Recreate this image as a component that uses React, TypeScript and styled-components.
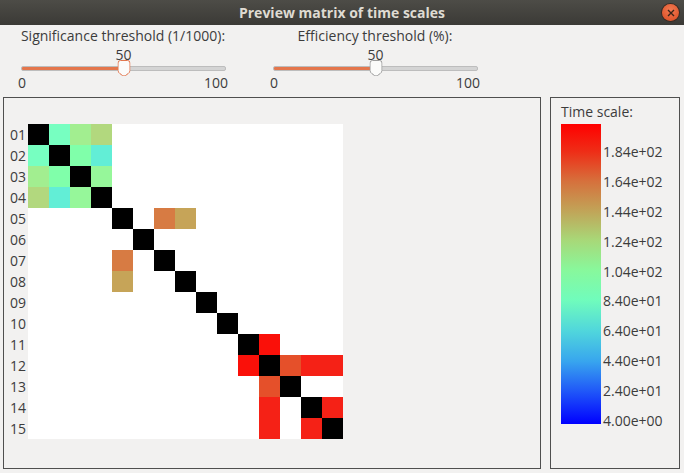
import React from 'react';
import styled, { createGlobalStyle } from 'styled-components';

const GlobalStyle = createGlobalStyle`
  html, body {
    margin: 0;
    padding: 0;
    background: #f2f1f0;
  }
  body {
    font-family: 'Open Sans', 'Liberation Sans', sans-serif;
    color: #3c3c3c;
  }
`;

const Window = styled.div`
  width: 684px;
  height: 473px;
  display: flex;
  flex-direction: column;
  background: #f2f1f0;
  overflow: hidden;
`;

const TitleBar = styled.div`
  height: 25px;
  display: grid;
  grid-template-columns: 1fr auto 1fr;
  align-items: center;
  background: linear-gradient(#4d4c47, #3b3a36);
`;

const Title = styled.div`
  grid-column: 2;
  font-size: 14px;
  font-weight: bold;
  color: #dfdbd2;
  line-height: 16px;
`;

const CloseButton = styled.div`
  grid-column: 3;
  justify-self: end;
  margin-right: 5px;
  width: 17px;
  height: 17px;
  border-radius: 50%;
  background: radial-gradient(circle at 50% 35%, #f27a52, #d9491f);
  box-shadow: 0 0 0 1px #3a2a22;
  display: flex;
  align-items: center;
  justify-content: center;
`;

const Controls = styled.div`
  height: 72px;
  display: flex;
  gap: 42px;
  padding: 3px 0 0 18px;
  box-sizing: border-box;
`;

const SliderGroup = styled.div`
  width: 210px;
  display: flex;
  flex-direction: column;
`;

const GroupLabel = styled.div`
  height: 16px;
  line-height: 16px;
  font-size: 14px;
  text-align: center;
  white-space: nowrap;
`;

const ValueRow = styled.div`
  height: 17px;
  margin: 0 2px 0 3px;
  position: relative;
`;

const ValueText = styled.span<{ $pct: number }>`
  position: absolute;
  left: ${({ $pct }) => $pct}%;
  top: 3px;
  transform: translateX(-50%);
  line-height: 15px;
  font-size: 14px;
`;

const TrackArea = styled.div`
  height: 14px;
  margin: 0 2px 0 3px;
  position: relative;
  display: flex;
  align-items: center;
`;

const Track = styled.div`
  flex: 1;
  height: 3px;
  border-radius: 2px;
  background: #d4d4d4;
  border: 1px solid #bdbdbd;
  overflow: hidden;
  display: flex;
`;

const TrackFill = styled.div<{ $pct: number }>`
  width: ${({ $pct }) => $pct}%;
  background: #e4764c;
`;

const Thumb = styled.svg<{ $pct: number }>`
  position: absolute;
  left: ${({ $pct }) => $pct}%;
  top: -1px;
  transform: translateX(-50%);
`;

const Ticks = styled.div`
  height: 14px;
  line-height: 14px;
  font-size: 14px;
  display: flex;
  justify-content: space-between;
  margin-top: 1px;
`;

const Panels = styled.div`
  flex: 1;
  display: flex;
  gap: 9px;
  padding: 0 4px 4px 3px;
`;

const MatrixPanel = styled.div`
  width: 538px;
  border: 1px solid #4f4f4f;
  box-sizing: border-box;
  padding: 26px 0 0 6px;
`;

const Matrix = styled.div`
  display: grid;
  grid-template-columns: 18px repeat(15, 21px);
  grid-auto-rows: 21px;
`;

const RowLabel = styled.div`
  font-size: 14px;
  line-height: 21px;
  text-align: right;
  padding-right: 2px;
`;

const Cell = styled.div<{ $color: string }>`
  background: ${({ $color }) => $color};
`;

const ScalePanel = styled.div`
  flex: 1;
  border: 1px solid #4f4f4f;
  box-sizing: border-box;
  padding: 6px 0 0 10px;
  display: flex;
  flex-direction: column;
  gap: 4px;
`;

const ScaleTitle = styled.div`
  height: 16px;
  line-height: 16px;
  font-size: 14px;
`;

const ScaleBody = styled.div`
  display: flex;
  gap: 2px;
`;

const ColorBar = styled.div`
  width: 40px;
  height: 300px;
  background: linear-gradient(
    to bottom,
    #ff0000 0%,
    #ee2e17 9.3%,
    #d6703c 19%,
    #c1a458 29%,
    #a8d878 38.7%,
    #88f89c 48.7%,
    #70fcbc 58.7%,
    #50d6dc 69%,
    #38a6ee 79%,
    #2058f8 89%,
    #0000ff 100%
  );
`;

const ScaleLabels = styled.div`
  display: flex;
  flex-direction: column;
  gap: 13.9px;
  padding-top: 20px;
`;

const ScaleLabel = styled.div`
  height: 16px;
  line-height: 16px;
  font-size: 14px;
`;

const SCALE_LABELS = ['1.84e+02', '1.64e+02', '1.44e+02', '1.24e+02', '1.04e+02', '8.40e+01', '6.40e+01', '4.40e+01', '2.40e+01', '4.00e+00'];

// upper-triangle pairs (1-indexed), mirrored below the diagonal
const PAIRS: [number, number, string][] = [
  [1, 2, '#77ffc1'],
  [1, 3, '#a2ee90'],
  [1, 4, '#b2d87e'],
  [2, 3, '#80ffaa'],
  [2, 4, '#62eed6'],
  [3, 4, '#96f79a'],
  [5, 7, '#d77b43'],
  [5, 8, '#c6a458'],
  [11, 12, '#fa1009'],
  [12, 13, '#e5502a'],
  [12, 14, '#f52116'],
  [12, 15, '#f52116'],
  [14, 15, '#f52116'],
];

const N = 15;

const buildMatrix = () => {
  const rows: string[][] = Array.from({ length: N }, (_, i) =>
    Array.from({ length: N }, (_, j) => (i === j ? '#000000' : '#ffffff'))
  );
  PAIRS.forEach(([a, b, c]) => {
    rows[a - 1][b - 1] = c;
    rows[b - 1][a - 1] = c;
  });
  return rows;
};

interface SliderProps {
  label: string;
  value: number;
  focused?: boolean;
}

const Slider: React.FC<SliderProps> = ({ label, value, focused }) => (
  <SliderGroup>
    <GroupLabel>{label}</GroupLabel>
    <ValueRow>
      <ValueText $pct={value}>{value}</ValueText>
    </ValueRow>
    <TrackArea>
      <Track>
        <TrackFill $pct={value} />
      </Track>
      <Thumb $pct={value} width={13} height={16} viewBox='0 0 13 16'>
        <path
          d='M0.5 3 a2.5 2.5 0 0 1 2.5 -2.5 h7 a2.5 2.5 0 0 1 2.5 2.5 v7.5 q0 1.8 -2 3.2 l-2.6 1.9 q-1.4 0.9 -2.8 0 l-2.6 -1.9 q-2 -1.4 -2 -3.2 z'
          fill='#fbfbfa'
          stroke={focused ? '#e2774f' : '#9c9c9c'}
        />
      </Thumb>
    </TrackArea>
    <Ticks>
      <span>0</span>
      <span>100</span>
    </Ticks>
  </SliderGroup>
);

export default function App() {
  const matrix = buildMatrix();

  return (
    <Window>
      <GlobalStyle />
      <TitleBar>
        <Title>Preview matrix of time scales</Title>
        <CloseButton>
          <svg width={8} height={8} viewBox='0 0 8 8'>
            <path d='M1 1 L7 7 M7 1 L1 7' stroke='#3a2418' strokeWidth={1.4} />
          </svg>
        </CloseButton>
      </TitleBar>

      <Controls>
        <Slider label='Significance threshold (1/1000):' value={50} focused />
        <Slider label='Efficiency threshold (%):' value={50} />
      </Controls>

      <Panels>
        <MatrixPanel>
          <Matrix>
            {matrix.map((row, i) => (
              <React.Fragment key={`row-${i}`}>
                <RowLabel>{String(i + 1).padStart(2, '0')}</RowLabel>
                {row.map((c, j) => (
                  <Cell key={`cell-${i}-${j}`} $color={c} />
                ))}
              </React.Fragment>
            ))}
          </Matrix>
        </MatrixPanel>

        <ScalePanel>
          <ScaleTitle>Time scale:</ScaleTitle>
          <ScaleBody>
            <ColorBar />
            <ScaleLabels>
              {SCALE_LABELS.map((l) => (
                <ScaleLabel key={l}>{l}</ScaleLabel>
              ))}
            </ScaleLabels>
          </ScaleBody>
        </ScalePanel>
      </Panels>
    </Window>
  );
}
